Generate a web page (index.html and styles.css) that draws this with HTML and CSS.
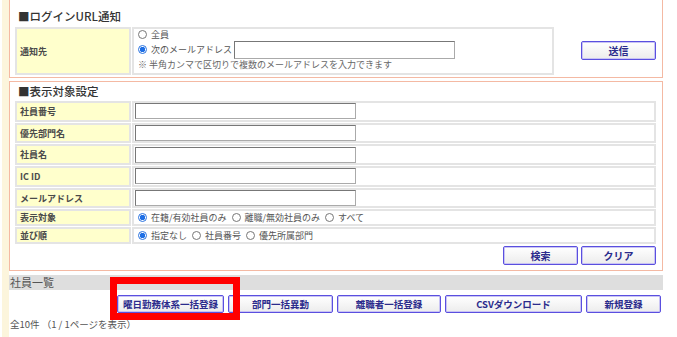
FILE: index.html
```html
<!DOCTYPE html>
<html lang="ja">
<head>
  <meta charset="UTF-8">
  <title>社員一覧</title>
  <link rel="stylesheet" href="styles.css">
</head>
<body>
  <div class="page">
    <section class="panel panel-notify">
      <h2 class="panel-title">■ログインURL通知</h2>
      <div class="notify-body">
        <div class="form-grid grid-notify">
          <div class="label">通知先</div>
          <div class="value value-notify">
            <label class="opt-line"><input type="radio" name="to">全員</label>
            <label class="opt-line opt-mail"><input type="radio" name="to" checked>次のメールアドレス<input type="text" class="text-input mail-input"></label>
            <div class="note">※ 半角カンマで区切りで複数のメールアドレスを入力できます</div>
          </div>
        </div>
        <button class="btn btn-send">送信</button>
      </div>
    </section>

    <section class="panel panel-filter">
      <h2 class="panel-title">■表示対象設定</h2>
      <div class="form-grid grid-filter">
        <div class="label">社員番号</div>
        <div class="value"><input type="text" class="text-input"></div>
        <div class="label">優先部門名</div>
        <div class="value"><input type="text" class="text-input"></div>
        <div class="label">社員名</div>
        <div class="value"><input type="text" class="text-input"></div>
        <div class="label">IC ID</div>
        <div class="value"><input type="text" class="text-input"></div>
        <div class="label">メールアドレス</div>
        <div class="value"><input type="text" class="text-input"></div>
        <div class="label">表示対象</div>
        <div class="value radios">
          <label><input type="radio" name="target" checked>在籍/有効社員のみ</label>
          <label><input type="radio" name="target">離職/無効社員のみ</label>
          <label><input type="radio" name="target">すべて</label>
        </div>
        <div class="label">並び順</div>
        <div class="value radios">
          <label><input type="radio" name="order" checked>指定なし</label>
          <label><input type="radio" name="order">社員番号</label>
          <label><input type="radio" name="order">優先所属部門</label>
        </div>
      </div>
      <div class="btn-row">
        <button class="btn">検索</button>
        <button class="btn">クリア</button>
      </div>
    </section>

    <div class="list-bar">社員一覧</div>
    <div class="list-actions">
      <button class="btn w107">曜日勤務体系一括登録</button>
      <button class="btn w105">部門一括異動</button>
      <button class="btn w104">離職者一括登録</button>
      <button class="btn w137">CSVダウンロード</button>
      <button class="btn w75">新規登録</button>
    </div>
    <p class="count">全10件 （1 / 1ページを表示）</p>
  </div>

  <!-- highlight frame -->
  <div class="highlight"></div>
</body>
</html>
```

FILE: styles.css
```css
body {
  margin: 0;
  font-family: "Noto Sans CJK JP", "Noto Sans", sans-serif;
  color: #444;
  background: #fff;
  overflow: hidden;
}
.page {
  margin-left: 2px;
  border-left: 7px solid #fcf5dc;
  width: 654px;
  min-height: 340px;
}
.panel {
  box-sizing: border-box;
  width: 654px;
  border: 1px solid #f4b9a3;
}
.panel-notify {
  margin-top: -3px;
  padding: 11px 6px 2px 5px;
}
.panel-filter {
  margin-top: 3px;
  padding: 2px 6px 5px 5px;
}
.panel-title {
  margin: 0 0 4px 3px;
  font-size: 11.5px;
  line-height: 14px;
  font-weight: 500;
  color: #333;
}
.panel-filter .panel-title {
  margin-bottom: 3px;
}
.notify-body {
  display: flex;
  align-items: flex-start;
}
.form-grid {
  display: grid;
  grid-template-columns: 116px 1fr;
  gap: 1px;
}
.grid-notify {
  width: 539px;
}
.grid-filter {
  grid-template-rows: repeat(5, 20.7px) 16.5px 17px;
}
.label, .value {
  box-sizing: border-box;
  border: 2px solid #e4e4e4;
}
.label {
  background: #ffffcc;
  padding-left: 3px;
  font-size: 9px;
  font-weight: bold;
  color: #4a4a4a;
  display: flex;
  align-items: center;
}
.value {
  padding-left: 1px;
  display: flex;
  align-items: center;
  font-size: 9px;
  color: #555;
}
.value-notify {
  display: block;
  padding-bottom: 2px;
}
.opt-line {
  display: flex;
  align-items: center;
  height: 11px;
}
.opt-mail {
  height: 19px;
}
.note {
  line-height: 12px;
  padding-left: 3px;
  color: #666;
}
.text-input {
  box-sizing: border-box;
  width: 221px;
  height: 16px;
  margin: 0;
  padding: 0;
  border: 1px solid #aaa;
  border-top-color: #777;
  border-left-color: #777;
  background: #fff;
}
.mail-input {
  width: 221px;
  height: 18px;
  margin-left: 2px;
}
input[type="radio"] {
  appearance: none;
  box-sizing: border-box;
  width: 9px;
  height: 9px;
  margin: 0 4px 0 3px;
  border: 1px solid #777;
  border-radius: 50%;
  background: #fff;
}
input[type="radio"]:checked {
  border-color: #2a73e0;
  background: radial-gradient(circle, #1f6fe5 0 2.5px, #fff 3px);
}
.radios label {
  display: flex;
  align-items: center;
  margin-right: 2px;
}
.btn {
  box-sizing: border-box;
  width: 75px;
  height: 19px;
  padding: 0;
  border: 1px solid #5a4fdf;
  border-radius: 2px;
  box-shadow: inset 0 0 0 1px #c9c4f4;
  background: linear-gradient(#ffffff, #ececec);
  font-family: inherit;
  font-size: 10px;
  font-weight: bold;
  color: #2b2b8c;
}
.btn-send {
  margin: 14px 0 0 auto;
}
.btn-row {
  display: flex;
  justify-content: flex-end;
  gap: 3px;
  margin-top: 2.5px;
}
.list-bar {
  margin-top: 4px;
  height: 15px;
  line-height: 15px;
  background: #dedede;
  font-size: 11px;
  color: #555;
  padding-left: 1px;
}
.list-actions {
  display: flex;
  justify-content: flex-end;
  gap: 4px;
  margin-top: 5px;
  padding-right: 2px;
}
.list-actions .btn {
  height: 18px;
  font-size: 9.5px;
}
.w107 { width: 107px !important; }
.w105 { width: 105px !important; }
.w104 { width: 104px !important; }
.w137 { width: 137px !important; }
.w75 { width: 75px !important; }
.count {
  margin: 5px 0 0 1px;
  font-size: 9.5px;
  line-height: 13px;
  color: #555;
}
.highlight {
  position: absolute;
  left: 110px;
  top: 277px;
  width: 130px;
  height: 43px;
  box-sizing: border-box;
  border: 7px solid #ff0000;
}
```
